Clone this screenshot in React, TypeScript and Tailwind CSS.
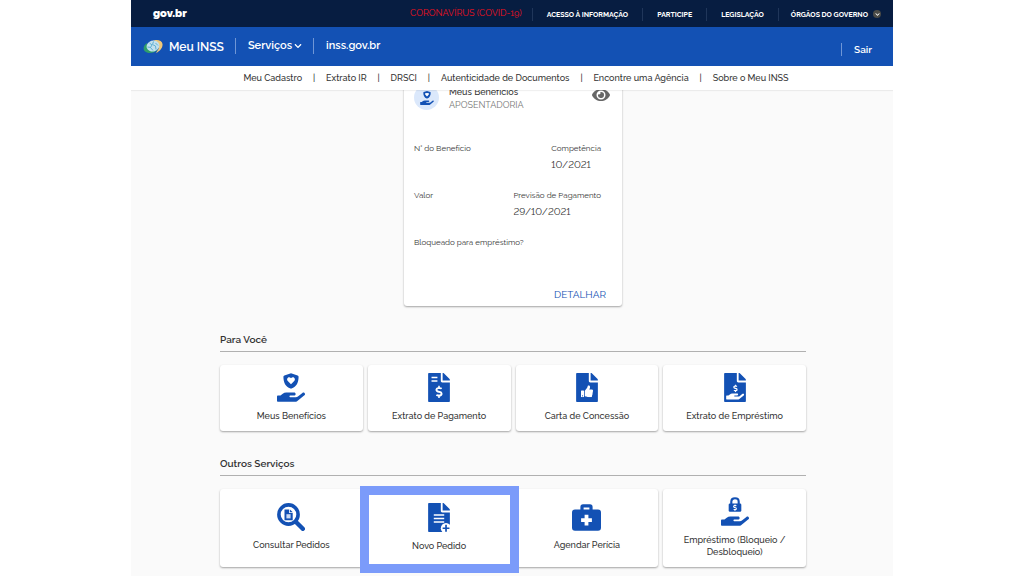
import type { ReactNode } from "react";
import { FaChevronDown, FaDollarSign, FaEye, FaThumbsUp } from "react-icons/fa";

const HAND =
  "M565.3 328.1c-11.8-10.7-30.2-10-42.6 0L430.3 402c-11.3 9.1-25.4 14-40 14H272c-8.8 0-16-7.2-16-16s7.2-16 16-16h78.3c15.9 0 30.7-10.9 33.3-26.6 3.3-20-12.1-37.4-31.6-37.4H192c-27 0-53.1 9.3-74.1 26.3L71.4 384H16c-8.8 0-16 7.2-16 16v96c0 8.8 7.2 16 16 16h356.8c14.5 0 28.6-4.9 40-14L564 377c15.2-12.1 16.4-35.3 1.3-48.9z";
const FILE =
  "M379 107L277 5c-3-3-6-5-11-5h-10v134h128v-12c0-6-1-11-5-15zM224 140V0H14C6 0 0 6 0 14v484c0 8 6 14 14 14h356c8 0 14-6 14-14V166H250c-16 0-26-10-26-26z";

function ShieldHand({ className }: { className: string }) {
  return (
    <svg viewBox="0 0 576 590" className={className} fill="currentColor" aria-hidden="true">
      <path d="M288 0l136 46c12 5 20 14 20 28 0 120-42 204-146 244-7 3-13 3-20 0C174 278 132 194 132 74c0-14 8-23 20-28z" />
      <path
        fill="#fff"
        d="M288 228l-66-68c-20-21-19-52 2-68 18-14 44-11 60 7l4 5 4-5c16-18 42-21 60-7 21 16 22 47 2 68z"
      />
      <path d={HAND} transform="translate(0 78)" />
    </svg>
  );
}

function FileIcon({ children }: { children: ReactNode }) {
  return (
    <svg viewBox="0 0 384 512" className="h-[29px] w-[22px] overflow-visible" fill="currentColor" aria-hidden="true">
      <path d={FILE} />
      {children}
    </svg>
  );
}

function InvoiceIcon() {
  return (
    <FileIcon>
      <path stroke="#fff" strokeWidth="26" d="M60 78h104M60 142h104" />
      <FaDollarSign x={82} y={222} size={220} color="#fff" />
    </FileIcon>
  );
}

function ThumbIcon() {
  return (
    <FileIcon>
      <FaThumbsUp x={86} y={216} size={214} color="#fff" />
    </FileIcon>
  );
}

function LoanIcon() {
  return (
    <FileIcon>
      <FaDollarSign x={132} y={204} size={136} color="#fff" />
      <path d={HAND} fill="#fff" transform="translate(36 188) scale(.55)" />
    </FileIcon>
  );
}

function SearchFileIcon() {
  return (
    <svg viewBox="0 0 28 28" className="size-[28px]" fill="currentColor" aria-hidden="true">
      <circle cx="11.5" cy="11.5" r="9.6" fill="none" stroke="currentColor" strokeWidth="3.6" />
      <path d="M19 19l6.8 6.8" stroke="currentColor" strokeWidth="4.4" strokeLinecap="round" />
      <path d="M7.5 6.5h4.6v3.6h3.6v7.2H7.5z" />
      <path d="M12.9 6.4v2.9h2.9z" />
      <path fill="#c9d8f3" d="M9.4 11.2h4.2v4.2H9.4z" />
    </svg>
  );
}

function NewFileIcon() {
  return (
    <FileIcon>
      <path stroke="#fff" strokeWidth="25" d="M100 212h184M100 274h184M100 336h184" />
      <circle cx="316" cy="446" r="92" fill="#fff" />
      <path stroke="currentColor" strokeWidth="30" d="M316 386v120M256 446h120" />
    </FileIcon>
  );
}

function MedkitIcon() {
  return (
    <svg viewBox="0 0 29 27" className="h-[27px] w-[29px]" aria-hidden="true">
      <path d="M10 7V2.9c0-.6.4-1 1-1h7c.6 0 1 .4 1 1V7" fill="none" stroke="currentColor" strokeWidth="3.2" />
      <rect y="5.4" width="29" height="21.4" rx="3" fill="currentColor" />
      <path d="M14.5 10.8v10.8M9.1 16.2h10.8" stroke="#fff" strokeWidth="3.8" />
    </svg>
  );
}

function LockHandIcon() {
  return (
    <svg viewBox="0 0 576 590" className="h-[29px] w-[28px]" fill="currentColor" aria-hidden="true">
      <path d="M212 140V92c0-92 152-92 152 0v48" fill="none" stroke="currentColor" strokeWidth="44" />
      <rect x="158" y="128" width="260" height="174" rx="26" />
      <FaDollarSign x={219} y={146} size={138} color="#fff" />
      <path d={HAND} transform="translate(0 78)" />
    </svg>
  );
}

function Logo() {
  return (
    <svg viewBox="0 0 40 30" className="h-[15px] w-[20px]" aria-hidden="true">
      <path d="M8 8C-2 14-1 27 11 28c8 1 15-3 19-7L17 23 9 17z" fill="#2f9e6b" />
      <path d="M17 5C26-1 38 2 39 10c1 8-6 15-13 18 4-6 7-9 6-15C31 7 25 5 17 5z" fill="#f0c878" />
      <ellipse cx="20" cy="14" rx="13" ry="11" transform="rotate(-18 20 14)" fill="#c3e0ee" />
      <path d="M13 8l5 4-3 5 5 6M21 5l-2 6 6 3 1 7M9 16l7 1M25 8l5 5" fill="none" stroke="#5fb0d2" strokeWidth="2" />
    </svg>
  );
}

const govLinks = ["ACESSO À INFORMAÇÃO", "PARTICIPE", "LEGISLAÇÃO"];
const navLinks = [
  "Meu Cadastro",
  "Extrato IR",
  "DRSCI",
  "Autenticidade de Documentos",
  "Encontre uma Agência",
  "Sobre o Meu INSS",
];

type Service = { label: string; icon: ReactNode; highlighted?: boolean };

const forYou: Service[] = [
  { label: "Meus Benefícios", icon: <ShieldHand className="h-[29px] w-[28px]" /> },
  { label: "Extrato de Pagamento", icon: <InvoiceIcon /> },
  { label: "Carta de Concessão", icon: <ThumbIcon /> },
  { label: "Extrato de Empréstimo", icon: <LoanIcon /> },
];
const others: Service[] = [
  { label: "Consultar Pedidos", icon: <SearchFileIcon /> },
  { label: "Novo Pedido", icon: <NewFileIcon />, highlighted: true },
  { label: "Agendar Perícia", icon: <MedkitIcon /> },
  { label: "Empréstimo (Bloqueio / Desbloqueio)", icon: <LockHandIcon /> },
];

function ServiceSection({ title, items, tall }: { title: string; items: Service[]; tall?: boolean }) {
  return (
    <section>
      <h2 className="border-b border-[#b0b0b0] pb-[4px] text-[10px] leading-[15px] font-semibold text-[#333]">
        {title}
      </h2>
      <div className="mt-[13px] grid grid-cols-4 gap-[5px]">
        {items.map((item) => (
          <a
            key={item.label}
            href="#"
            className={`relative flex flex-col items-center justify-center gap-[8px] rounded-[3px] bg-white px-[16px] pb-[2px] text-center text-[9px] leading-[12px] font-medium text-[#333] shadow-[0_1px_2px_rgba(0,0,0,0.35)] ${tall ? "min-h-[78px]" : "min-h-[66px]"}`}
          >
            <span className="text-[#1351b4]">{item.icon}</span>
            <span>{item.label}</span>
            {item.highlighted && (
              <span className="absolute -inset-x-[8px] -top-[3px] -bottom-[6px] z-10 border-[9px] border-[#7b9bfa]" />
            )}
          </a>
        ))}
      </div>
    </section>
  );
}

function Field({ label, value, className = "" }: { label: string; value?: string; className?: string }) {
  return (
    <div className={`min-h-[47px] ${className}`}>
      <dt className="text-[8px] leading-[12px] text-[#333]">{label}</dt>
      <dd className="mt-[4px] text-[10px] leading-[14px] text-[#333] lining-nums">{value}</dd>
    </div>
  );
}

export default function App() {
  return (
    <div className="h-screen overflow-hidden bg-white font-[Raleway,Lato,sans-serif]">
      <div className="mx-auto flex h-full max-w-[762px] flex-col overflow-hidden bg-[#fafafa]">
        <header className="relative z-10 shrink-0">
          <div className="flex h-[27px] items-center bg-[#071d41] pr-[12px] pl-[22px] pt-[1px] text-[7px] font-bold text-white">
            <a href="#" className="text-[11px] leading-[14px] font-black">gov.br</a>
            <a href="#" className="mr-[10px] ml-auto text-[9px] font-normal text-[#f0101c]">
              CORONAVÍRUS (COVID-19)
            </a>
            {govLinks.map((link) => (
              <a key={link} href="#" className="border-l border-[#20365a] px-[14px] leading-[13px]">
                {link}
              </a>
            ))}
            <button className="flex items-center gap-[5px] border-l border-[#20365a] pl-[12px] leading-[13px]">
              ÓRGÃOS DO GOVERNO
              <span className="flex size-[8px] items-center justify-center rounded-full bg-[#4a4a46]">
                <FaChevronDown size={5} />
              </span>
            </button>
          </div>
          <div className="flex h-[39px] items-center bg-[#1351b4] pr-[21px] pl-[12px] text-[11px] font-semibold text-white">
            <a href="#" className="flex items-center gap-[6px] text-[12px]">
              <Logo />
              Meu INSS
            </a>
            <button className="-mt-[2px] ml-[11px] flex items-center gap-[2px] border-l border-[#6f96d6] pl-[12px] leading-[16px]">
              Serviços
              <FaChevronDown size={8} />
            </button>
            <a href="#" className="-mt-[2px] ml-[11px] border-l border-[#6f96d6] pl-[12px] leading-[16px]">
              inss.gov.br
            </a>
            <a href="#" className="mt-[5px] ml-auto border-l border-[#6f96d6] pl-[12px] text-[10px] leading-[13px]">
              Sair
            </a>
          </div>
          <nav className="flex h-[24px] items-center justify-center bg-white pt-[2px] pl-[8px] text-[9px] font-medium text-[#333] shadow-[0_1px_1px_rgba(0,0,0,0.06)]">
            {navLinks.map((link, i) => (
              <span key={link} className="flex">
                {i > 0 && <span className="w-[24px] text-center">|</span>}
                <a href="#">{link}</a>
              </span>
            ))}
          </nav>
        </header>
        <main className="-mt-[16px] flex flex-col pl-[2px]">
          <article className="mx-auto w-[218px] rounded-[3px] bg-white px-[10px] pt-[11px] shadow-[0_1px_2px_rgba(0,0,0,0.35)]">
            <div className="flex items-start">
              <span className="flex size-[25px] items-center justify-center rounded-full bg-[#dbe8fb] text-[#1351b4]">
                <ShieldHand className="size-[14px]" />
              </span>
              <div className="ml-[10px] pt-[1px] text-[9px] leading-[13px]">
                <h1 className="font-medium text-[#333]">Meus Benefícios</h1>
                <p className="text-[#777]">APOSENTADORIA</p>
              </div>
              <button className="mt-[1px] mr-[2px] ml-auto text-[#666]" aria-label="Mostrar dados">
                <FaEye size={18} />
              </button>
            </div>
            <dl className="mt-[30px] mr-[11px] grid grid-cols-[1fr_auto]">
              <Field label="N° do Benefício" />
              <Field label="Competência" value="10/2021" className="justify-self-end" />
              <Field label="Valor" />
              <Field label="Previsão de Pagamento" value="29/10/2021" />
              <Field label="Bloqueado para empréstimo?" className="col-span-2" />
            </dl>
            <div className="mt-[5px] flex justify-end pr-[6px] pb-[4px]">
              <a href="#" className="text-[10px] leading-[14px] text-[#1351b4]">DETALHAR</a>
            </div>
          </article>
          <div className="mx-auto mt-[26px] flex w-full max-w-[586px] flex-col gap-[25px]">
            <ServiceSection title="Para Você" items={forYou} />
            <ServiceSection title="Outros Serviços" items={others} tall />
          </div>
        </main>
      </div>
    </div>
  );
}
